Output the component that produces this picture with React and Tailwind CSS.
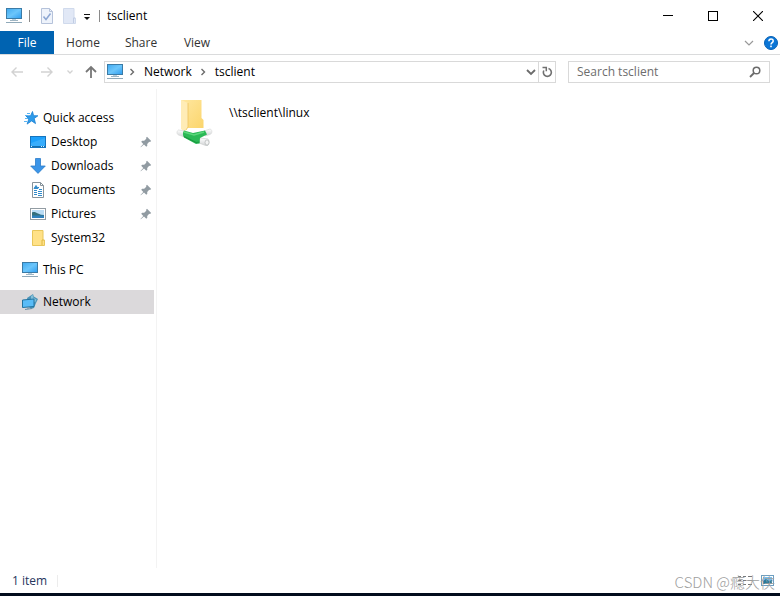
import React from "react";

function Monitor() {
  return (
    <svg width="16" height="16" viewBox="0 0 16 16" className="shrink-0">
      <defs>
        <linearGradient id="screen" x1="0" y1="0" x2="1" y2="1">
          <stop offset="0" stopColor="#3fa9f0" />
          <stop offset="0.5" stopColor="#6cc6fb" />
          <stop offset="1" stopColor="#2e9df0" />
        </linearGradient>
      </defs>
      <rect x="0.5" y="0.5" width="15" height="10" fill="url(#screen)" stroke="#3b7ba6" />
      <rect x="6" y="11" width="4" height="1" fill="#b9d0de" />
      <rect x="4" y="12" width="8" height="1" fill="#9fb5c3" />
      <rect x="0" y="14" width="16" height="1" fill="#8fa9b9" />
    </svg>
  );
}

function StarIcon() {
  return (
    <svg width="16" height="16" viewBox="0 0 16 16" className="shrink-0">
      <path d="M9.500 1.500l1.100 4.200 4.300.1-3.700 2.700 1.300 5.100-3.900-2.700-4.500 3.200 1.700-5.100L3 6l4.600-.3z" fill="#2e9bea" stroke="#1a7fd0" strokeWidth="0.800" />
      <path d="M4 3.500h3M2 5.500h3M2 8.500h3M1 11.500h3" stroke="#5ab4f3" strokeWidth="1" />
    </svg>
  );
}

function DesktopIcon() {
  return (
    <svg width="16" height="16" viewBox="0 0 16 16" className="shrink-0">
      <rect x="0.5" y="2.5" width="15" height="11" fill="#1ca0fb" stroke="#1674bd" />
      <path d="M1 12V9l14-5v8z" fill="#38adfc" />
      <path d="M1 12.5h14" stroke="#146fae" />
      <path d="M1 12.500h1M11 12.500h1M13 12.500h1" stroke="#d5efff" />
    </svg>
  );
}

function DownloadIcon() {
  return (
    <svg width="16" height="16" viewBox="0 0 16 16" className="shrink-0">
      <path d="M5.500.5h5v7.500h4.800L8 15.400.7 8h4.800z" fill="#3b95e8" stroke="#2b7cc9" strokeWidth="0.8" />
    </svg>
  );
}

function DocumentIcon() {
  return (
    <svg width="16" height="16" viewBox="0 0 16 16" className="shrink-0">
      <path d="M2.500.5h8l3 3v12h-11z" fill="#fff" stroke="#87939b" />
      <path d="M10.500.5v3h3" fill="none" stroke="#87939b" />
      <path d="M4 6.500l2-3 2 3zM8 5.500h1M9 7.500h3M4 8.500h3M4 10.500h3M4 12.500h3M8 9.500h4M8 11.500h4M8 13.500h4" fill="#318bcb" stroke="#318bcb" />
    </svg>
  );
}

function PictureIcon() {
  return (
    <svg width="16" height="16" viewBox="0 0 16 16" className="shrink-0">
      <rect x="0.5" y="2.500" width="15" height="11" fill="#fff" stroke="#929ca3" />
      <rect x="2" y="4" width="12" height="8" fill="#b9dcf5" />
      <path d="M2 6.500c2-1 4 0 6 1s4 1.500 6 1.500V10H2z" fill="#34707d" />
      <rect x="2" y="9.500" width="12" height="2.500" fill="#2f81bd" />
    </svg>
  );
}

function FolderIcon() {
  return (
    <svg width="16" height="16" viewBox="0 0 16 16" className="shrink-0">
      <path d="M2.500.5h10.500v9.500h1.500v5.500h-12z" fill="#ffe187" stroke="#e8c65a" />
      <path d="M12 15v-5h1.500" fill="none" stroke="#dfb843" />
    </svg>
  );
}

function NetworkIcon() {
  return (
    <svg width="16" height="16" viewBox="0 0 16 16" className="shrink-0">
      <path d="M5 4l3-2 3-2 .8 2.500L16 5l-2 4-2 5-3 1-3-3z" fill="#4b94b8" />
      <path d="M9 2l2-1 .5 3 3 1.500-1.500 3-4-3z" fill="#83bfd8" />
      <path d="M.5 6l11.500-1v7.500L.5 13.500z" fill="#59bcf7" stroke="#22739f" />
      <path d="M6 13v2M3 15.500l7-1" stroke="#6a8fa5" />
    </svg>
  );
}

function PinIcon() {
  return (
    <svg width="12" height="12" viewBox="0 0 12 12" className="shrink-0" role="img" aria-label="Pinned">
      <path d="M7 .8l4.200 4.200-1.200.9-.8-.2-2 2.200.1 1.900-1 .9L4 8.500.8 11.300l-.3-.3L3.300 7.900 1.200 5.700l1-1 2 .1 2.100-2-.2-1z" fill="#919ba2" />
    </svg>
  );
}

function NetworkFolder() {
  return (
    <svg width="38" height="48" viewBox="0 0 38 48" className="shrink-0">
      <defs>
        <linearGradient id="folder" x1="0" y1="0" x2="1" y2="1">
          <stop offset="0" stopColor="#ffe7a0" />
          <stop offset="1" stopColor="#fbd56c" />
        </linearGradient>
        <linearGradient id="plug" x1="0" y1="0" x2="0" y2="1">
          <stop offset="0" stopColor="#ffffff" />
          <stop offset="1" stopColor="#cfd2d3" />
        </linearGradient>
      </defs>
      <path d="M5 2h20.500v18l2 2v8H9z" fill="url(#folder)" />
      <path d="M5 2l7 3v24l-3 5-4-3z" fill="#ffecb6" />
      <path d="M12 5v24l-2 3" stroke="#edc45d" strokeWidth="0.8" fill="none" />
      <path d="M2.500 32l7 1-1 6-6-2c-2-1-2-4 0-5z" fill="url(#plug)" stroke="#d1d4d4" strokeWidth="0.6" />
      <path d="M28 33l6-2c2.500.5 2.500 4.500 0 5.500l-5 1.500z" fill="url(#plug)" stroke="#d1d4d4" strokeWidth="0.6" />
      <path d="M24 40l8 1c2 2 1 6-1 7l-8-3z" fill="url(#plug)" stroke="#c6caca" strokeWidth="0.6" />
      <ellipse cx="31" cy="44.500" rx="2" ry="2.600" fill="#f3f4f4" stroke="#b2b6b6" strokeWidth="0.7" />
      <path d="M8 32.500l9 2.500 12-2.500 2 4-7 3.500-.5 5.500-3.500.5-12-6.500c-1.500-2-1.500-5 0-7z" fill="#2bb956" />
      <path d="M8 34l10 3 10-3" stroke="#5bd77b" strokeWidth="1.600" fill="none" />
      <path d="M8 38.500l12 6 3.500-.5" stroke="#18983f" strokeWidth="1.200" fill="none" />
    </svg>
  );
}

function Chevron({ down = false, color = "#6b6b6b", width = 1.4 }) {
  return (
    <svg width="10" height="10" viewBox="0 0 10 10" className="shrink-0">
      <path d={down ? "M1 3l4 4 4-4" : "M3.500 2l3 3-3 3"} fill="none" stroke={color} strokeWidth={width} />
    </svg>
  );
}

function Arrow({ path, color, width }) {
  return (
    <svg width="14" height="14" viewBox="0 0 14 14">
      <path d={path} fill="none" stroke={color} strokeWidth={width} />
    </svg>
  );
}

function TitleBar() {
  return (
    <header className="flex h-[31px] shrink-0 items-center pl-1.5">
      <Monitor />
      <span className="ml-[7px] h-3 w-px bg-[#8a8a8a]" />
      <button aria-label="Properties" className="ml-[10px]">
        <svg width="14" height="16" viewBox="0 0 14 16">
          <path d="M1.500.5h8l3 3v12h-11z" fill="#eef3fb" stroke="#b5c2da" />
          <path d="M9.500.5v3h3" fill="none" stroke="#b5c2da" />
          <path d="M3.500 8.500l2.500 3 4.500-6" fill="none" stroke="#8ca6d2" strokeWidth="1.500" />
        </svg>
      </button>
      <button aria-label="New folder" className="ml-[9px]">
        <svg width="14" height="16" viewBox="0 0 14 16">
          <path d="M.5.5h10.500v9.500h1.500v5.500H.5z" fill="#e1e8f6" stroke="#d0daec" />
          <path d="M10.500 15v-5h1.500" fill="none" stroke="#c1cde4" />
        </svg>
      </button>
      <button aria-label="Customize Quick Access Toolbar" className="ml-1.5">
        <svg width="8" height="8" viewBox="0 0 8 8">
          <path d="M1 2.500h6" stroke="#111" />
          <path d="M1 5h6L4 8z" fill="#111" />
        </svg>
      </button>
      <span className="ml-2 h-3 w-px bg-[#8a8a8a]" />
      <h1 className="ml-[7px]">tsclient</h1>
      <div className="ml-auto flex h-full">
        <button aria-label="Minimize" className="grid w-[45px] place-items-center">
          <svg width="10" height="10" viewBox="0 0 10 10"><path d="M0 4.500h10" stroke="#000" /></svg>
        </button>
        <button aria-label="Maximize" className="grid w-[45px] place-items-center">
          <svg width="10" height="10" viewBox="0 0 10 10"><rect x="0.500" y="0.500" width="9" height="9" fill="none" stroke="#000" /></svg>
        </button>
        <button aria-label="Close" className="grid w-[45px] place-items-center">
          <svg width="10" height="10" viewBox="0 0 10 10"><path d="M0 0l10 10M10 0L0 10" stroke="#000" strokeWidth="1.100" /></svg>
        </button>
      </div>
    </header>
  );
}

function Ribbon() {
  return (
    <nav className="flex h-6 shrink-0 items-stretch border-b border-[#dadbdc] text-[#333]">
      <button className="w-[54px] bg-[#0063b1] text-white">File</button>
      <button className="w-[58px]">Home</button>
      <button className="w-[58px]">Share</button>
      <button className="w-[54px]">View</button>
      <button aria-label="Expand the Ribbon" className="mr-2.5 ml-auto"><Chevron down color="#999" width={1.2} /></button>
      <button aria-label="Help" className="mr-[2px]">
        <svg width="14" height="14" viewBox="0 0 14 14">
          <circle cx="7" cy="7" r="6.500" fill="#0c76d6" stroke="#0861b4" />
          <path d="M4.900 5.200c0-3 4.300-2.900 4.300-.3C9.200 6.600 7 6.600 7 8.500" fill="none" stroke="#fff" strokeWidth="1.500" />
          <rect x="6.200" y="9.600" width="1.600" height="1.600" fill="#fff" />
        </svg>
      </button>
    </nav>
  );
}

function AddressBar() {
  return (
    <div className="flex h-[34px] shrink-0 items-center pr-2.5 pl-2.5">
      <button aria-label="Back" className="mr-4"><Arrow path="M13 7H2M6.500 2.500L2 7l4.500 4.500" color="#d2d2d2" width={1.4} /></button>
      <button aria-label="Forward"><Arrow path="M1 7h11M7.500 2.500L12 7l-4.500 4.500" color="#d2d2d2" width={1.4} /></button>
      <button aria-label="Recent locations" className="ml-3">
        <svg width="8" height="8" viewBox="0 0 8 8"><path d="M1.500 2.500L4 5l2.500-2.500" fill="none" stroke="#d2d2d2" strokeWidth="1.300" /></svg>
      </button>
      <button aria-label="Up" className="ml-[10px]"><Arrow path="M7 13V2M2 7l5-5 5 5" color="#777" width={1.8} /></button>
      <div className="ml-[6px] flex h-[22px] flex-1 items-center border border-[#d9d9d9] pl-0.5">
        <Monitor />
        <span className="ml-1"><Chevron /></span>
        <button className="ml-[7px]">Network</button>
        <span className="ml-1.5"><Chevron /></span>
        <button className="ml-[7px]">tsclient</button>
        <button aria-label="Previous locations" className="mr-[2px] ml-auto"><Chevron down width={1.8} /></button>
        <button aria-label="Refresh" className="grid h-full w-[17px] place-items-center border-l border-[#d9d9d9]">
          <svg width="12" height="12" viewBox="0 0 12 12">
            <path d="M7.500 2.500A4 4 0 1 1 2.800 4.500" fill="none" stroke="#707070" strokeWidth="1.600" />
            <path d="M1.500 1.500h3.800v3.800" fill="none" stroke="#707070" strokeWidth="1.500" />
          </svg>
        </button>
      </div>
      <label className="ml-3 flex h-[22px] w-[202px] items-center border border-[#d9d9d9] pr-2 pl-2">
        <input type="text" aria-label="Search tsclient" placeholder="Search tsclient" className="min-w-0 flex-1 outline-none placeholder:text-[#6d6d6d]" />
        <svg width="12" height="12" viewBox="0 0 12 12">
          <circle cx="7.500" cy="4.500" r="3.300" fill="none" stroke="#6b6b6b" strokeWidth="1.500" />
          <path d="M5 7l-4 4" stroke="#6b6b6b" strokeWidth="1.800" />
        </svg>
      </label>
    </div>
  );
}

const quickItems = [
  { name: "Desktop", icon: <DesktopIcon />, pinned: true },
  { name: "Downloads", icon: <DownloadIcon />, pinned: true },
  { name: "Documents", icon: <DocumentIcon />, pinned: true },
  { name: "Pictures", icon: <PictureIcon />, pinned: true },
  { name: "System32", icon: <FolderIcon />, pinned: false },
];

function Sidebar() {
  return (
    <aside className="w-[157px] shrink-0 border-r border-[#f3f3f3] pt-[17px] pr-0.5">
      <a href="#quick" className="flex h-6 items-center gap-1 pl-[23px]"><StarIcon />Quick access</a>
      <ul>
        {quickItems.map((item) => (
          <li key={item.name}>
            <a href={"#" + item.name} className="flex h-6 items-center gap-[5px] pr-0.5 pl-[30px]">
              {item.icon}
              <span className="flex-1">{item.name}</span>
              {item.pinned && <PinIcon />}
            </a>
          </li>
        ))}
      </ul>
      <a href="#pc" className="mt-2 flex h-6 items-center gap-[5px] pl-[22px]"><Monitor />This PC</a>
      <a href="#network" aria-current="page" className="mt-2 flex h-6 items-center gap-[5px] bg-[#dbd9db] pl-[22px]"><NetworkIcon />Network</a>
    </aside>
  );
}

function StatusBar() {
  return (
    <footer className="relative flex h-[25px] shrink-0 items-center pl-3 text-[#26365e]">
      <span>1 item</span>
      <span className="ml-2.5 h-3 w-px bg-[#ececec]" />
      <div className="mr-1.5 ml-auto flex gap-2">
        <button aria-label="Details view">
          <svg width="15" height="12" viewBox="0 0 15 12">
            <path d="M0 1.500h3M0 5.500h3M0 9.500h3M5 1.500h3M10 1.500h4M5 5.500h3M10 5.500h4M5 9.500h3M10 9.500h4" stroke="#77797b" />
          </svg>
        </button>
        <button aria-label="Large icons view">
          <svg width="13" height="12" viewBox="0 0 13 12">
            <rect x="0.500" y="0.500" width="12" height="10" fill="#fff" stroke="#6e9fc0" />
            <rect x="2" y="2" width="9" height="4" fill="#75bff0" />
            <path d="M2 6l3-2 3 2 3-1v4H2z" fill="#287a9b" />
          </svg>
        </button>
      </div>
      <span className="pointer-events-none absolute top-1 right-[5px] font-['Noto_Sans_CJK_SC',sans-serif] text-[15px] leading-5 font-light text-[#a0a0a0]">CSDN @瘾大侠</span>
    </footer>
  );
}

export default function App() {
  return (
    <div className="flex h-screen flex-col border-b-[3px] border-[#020c1c] bg-white font-['Open_Sans','Noto_Sans',sans-serif] text-[12px] leading-4 text-black">
      <TitleBar />
      <Ribbon />
      <AddressBar />
      <div className="flex min-h-0 flex-1">
        <Sidebar />
        <main className="flex-1 pt-[9px] pl-[19px]">
          <a href="#linux" className="inline-flex gap-[15px]">
            <NetworkFolder />
            <span className="pt-[7px]">\\tsclient\linux</span>
          </a>
        </main>
      </div>
      <StatusBar />
    </div>
  );
}
